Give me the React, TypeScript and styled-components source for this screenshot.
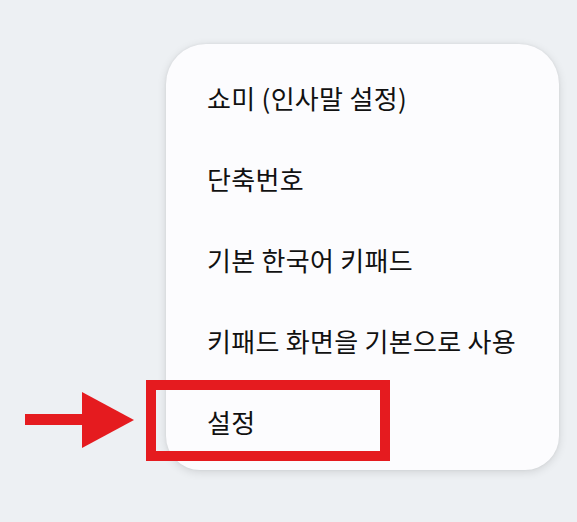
import React from 'react';
import styled, { createGlobalStyle } from 'styled-components';

const GlobalStyle = createGlobalStyle`
  html, body {
    margin: 0;
    padding: 0;
    background: #edf0f3;
  }
  body {
    font-family: 'Noto Sans CJK KR', 'Noto Sans', sans-serif;
  }
`;

const Page = styled.div`
  width: 577px;
  height: 522px;
  padding: 44px 18px 0 166px;
  box-sizing: border-box;
`;

const Menu = styled.ul`
  list-style: none;
  margin: 0;
  width: 393px;
  height: 426px;
  box-sizing: border-box;
  padding: 13px 0 8px 0;
  background: #fcfcfe;
  border-radius: 40px 40px 34px 34px;
  box-shadow: 0 2px 10px rgba(0, 0, 0, 0.12), 0 0 3px rgba(0, 0, 0, 0.06);
`;

const Item = styled.li`
  position: relative;
  height: 81px;
  display: flex;
  align-items: center;
  padding-left: 41px;
  font-size: 26px;
  color: #111;
  letter-spacing: 0.3px;
`;

const Highlight = styled.div`
  position: absolute;
  left: -20px;
  top: -1px;
  width: 244px;
  height: 81px;
  box-sizing: border-box;
  border: 10px solid #e51b1f;
  pointer-events: none;
`;

const Arrow = styled.svg`
  position: absolute;
  left: -141px;
  top: 10px;
`;

const items = [
  '쇼미 (인사말 설정)',
  '단축번호',
  '기본 한국어 키패드',
  '키패드 화면을 기본으로 사용',
  '설정',
];

export default function App() {
  return (
    <>
      <GlobalStyle />
      <Page>
        <Menu>
          {items.map((label, i) => (
            <Item key={label}>
              {label}
              {i === items.length - 1 && (
                <>
                  <Highlight />
                  <Arrow width="110" height="58" viewBox="0 0 110 58">
                    <rect x="0" y="23" width="58" height="11" fill="#e51b1f" />
                    <polygon points="57,1 109,29 57,57" fill="#e51b1f" />
                  </Arrow>
                </>
              )}
            </Item>
          ))}
        </Menu>
      </Page>
    </>
  );
}
